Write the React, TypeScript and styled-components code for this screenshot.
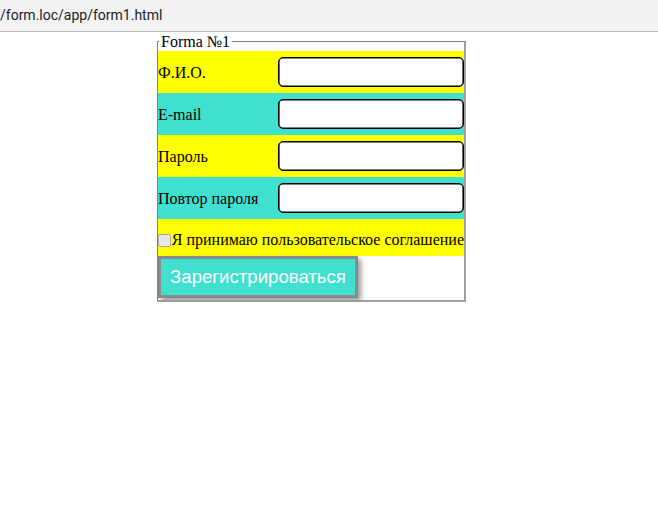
import React from "react";
import styled, { createGlobalStyle } from "styled-components";

const Global = createGlobalStyle`
  html, body { margin: 0; padding: 0; background: #fff; }
  body { font-family: "Liberation Serif", "Times New Roman", serif; font-size: 16px; color: #000; }
`;

const AddressBar = styled.div`
  height: 32px;
  background: #f1f3f4;
  border-bottom: 1px solid #bdbdbd;
  display: flex;
  align-items: center;
  font-family: Roboto, "Noto Sans", Arial, sans-serif;
  font-size: 14px;
  color: #202124;
  white-space: nowrap;
  padding-bottom: 2px;
  box-sizing: border-box;
`;

const Page = styled.div`
  padding-left: 157px;
`;

const FieldSet = styled.fieldset`
  margin: 0;
  padding: 0;
  width: 306px;
  border-width: 1px 2px 2px 1px;
  border-color: #808080 #a0a0a0 #a0a0a0 #808080;
  border-style: solid;
  min-inline-size: 0;
`;

const Legend = styled.legend`
  padding: 0 2px;
  margin-left: 1px;
  font-size: 16px;
  line-height: 19px;
`;

const Row = styled.div<{ $bg: string; $h?: number }>`
  display: grid;
  grid-template-columns: 120px 1fr;
  align-items: center;
  height: ${(p) => p.$h ?? 42}px;
  background: ${(p) => p.$bg};
`;

const Label = styled.label`
  font-size: 16px;
  padding-top: 2px;
`;

const Input = styled.input`
  box-sizing: border-box;
  width: 186px;
  height: 30px;
  border: 1px solid #000;
  border-radius: 5px;
  box-shadow: inset 0 0 0 0.6px #000;
  background: #fff;
  margin: 0;
  padding: 0 4px;
  outline: none;
`;

const CheckRow = styled.div`
  display: flex;
  align-items: center;
  height: 37px;
  background: #ffff00;
  padding-top: 5px;
  box-sizing: border-box;
  white-space: nowrap;
`;

const Check = styled.input`
  appearance: none;
  box-sizing: border-box;
  width: 13px;
  height: 13px;
  margin: 0 1px 0 0;
  border: 1px solid #a8a8a8;
  border-radius: 2px;
  background: #e8e8e8;
`;

const ButtonWrap = styled.div`
  height: 44px;
  box-sizing: border-box;
`;

const Button = styled.button`
  box-sizing: border-box;
  width: 200px;
  height: 42px;
  margin: 0;
  border: 3px solid #8a8a8a;
  background: #40e0d0;
  color: #fff;
  font-family: "Liberation Sans", Arial, sans-serif;
  font-size: 18.6px;
  padding: 0;
  box-shadow: 3px 3px 5px #9a9a9a;
  cursor: pointer;
`;

const fields = [
  { label: "Ф.И.О.", type: "text", bg: "#ffff00" },
  { label: "E-mail", type: "email", bg: "#40e0d0" },
  { label: "Пароль", type: "password", bg: "#ffff00" },
  { label: "Повтор пароля", type: "password", bg: "#40e0d0" },
];

export default function App() {
  return (
    <>
      <Global />
      <AddressBar>/form.loc/app/form1.html</AddressBar>
      <Page>
        <FieldSet>
          <Legend>Forma №1</Legend>
          {fields.map((f) => (
            <Row key={f.label} $bg={f.bg}>
              <Label>{f.label}</Label>
              <Input type={f.type} />
            </Row>
          ))}
          <CheckRow>
            <Check type="checkbox" />
            <span>Я принимаю пользовательское соглашение</span>
          </CheckRow>
          <ButtonWrap>
            <Button type="button">Зарегистрироваться</Button>
          </ButtonWrap>
        </FieldSet>
      </Page>
    </>
  );
}
